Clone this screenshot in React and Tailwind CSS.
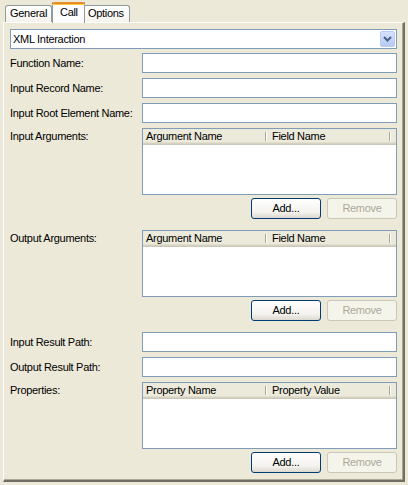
import React from "react";

const font = { fontFamily: '"Liberation Sans", Arial, sans-serif' };

function TextRow({ label, className = "" }) {
  return (
    <div className={"flex items-center h-[20px] " + className}>
      <div className="w-[132px] leading-[13px]">{label}</div>
      <div className="flex-1 h-[20px] border border-[#7F9DB9] bg-white" />
    </div>
  );
}

function Divider() {
  return <div className="w-[2px] h-[9px] border-l border-[#ACA899] border-r border-r-white self-center" />;
}

function ListRow({ label, c1, c2, className = "" }) {
  return (
    <div className={"flex " + className}>
      <div className="w-[132px] pt-[2px] leading-[13px]">{label}</div>
      <div className="flex-1 flex flex-col">
        <div className="h-[67px] border border-[#7F9DB9] bg-white">
          <div className="flex h-[16px] bg-[#EBEADB] shadow-[inset_0_-1px_0_#CBC7B8,inset_0_-2px_0_#D6D2C2,inset_0_-3px_0_#E2DECD] pb-[2px]">
            <div className="w-[122px] pl-[3px] leading-[14px]">{c1}</div>
            <Divider />
            <div className="w-[122px] pl-[5px] leading-[14px]">{c2}</div>
            <Divider />
          </div>
        </div>
        <div className="flex justify-end gap-[6px] mt-[3px]">
          <div className="w-[70px] h-[21px] rounded-[3px] border border-[#003C74] bg-[linear-gradient(#FFFFFF,#F3F2EE_70%,#DCD8CE)] flex items-center justify-center leading-[13px] text-black">
            Add...
          </div>
          <div className="w-[70px] h-[21px] rounded-[3px] border border-[#C9C7BA] bg-[#F5F4EA] flex items-center justify-center leading-[13px] text-[#ACA899]">
            Remove
          </div>
        </div>
      </div>
    </div>
  );
}

export default function App() {
  return (
    <div className="w-[408px] h-[485px] bg-[#ECE9D8] text-[11px] tracking-[-0.3px] text-black overflow-hidden" style={font}>
      {/* tab strip */}
      <div className="flex items-end h-[22px] pl-[5px]">
        <div className="w-[47px] h-[17px] border border-b-0 border-[#919B9C] rounded-t-[3px] bg-[linear-gradient(#FEFEFE,#F4F3EE)] pl-[4px] leading-[15px]">
          General
        </div>
        <div className="relative z-10 w-[33px] h-[21px] -mb-[1px] border-x border-[#919B9C] bg-[#FCFCFE] flex flex-col">
          <div className="h-[3px] -mx-[1px] rounded-t-[3px] bg-[#E68B2C] shadow-[inset_0_-1px_0_#FFC73C]" />
          <div className="pl-[7px] leading-[15px]">Call</div>
        </div>
        <div className="w-[45px] h-[17px] border border-b-0 border-l-0 border-[#919B9C] rounded-tr-[3px] bg-[linear-gradient(#FEFEFE,#F4F3EE)] pl-[3px] leading-[15px]">
          Options
        </div>
      </div>

      {/* panel */}
      <div className="ml-[3px] w-[402px] h-[460px] border-t border-l border-white border-r-2 border-b-2 border-r-[#716F64] border-b-[#716F64] shadow-[inset_-1px_-1px_0_#ACA899] pt-[6px] pl-[6px] pr-[6px] flex flex-col">
        <div className="flex items-center h-[20px] border border-[#7F9DB9] bg-white pl-[1px] pr-[1px]">
          <div className="flex-1 leading-[13px] pl-[1px]">XML Interaction</div>
          <div className="w-[15px] h-[16px] rounded-[2px] border border-[#BACBF3] bg-[linear-gradient(#D6E2FD,#B6C9F6)] flex items-center justify-center">
            <svg width="9" height="6" viewBox="0 0 9 6">
              <polyline points="1,1 4.5,4.5 8,1" fill="none" stroke="#4D6185" strokeWidth="2" />
            </svg>
          </div>
        </div>
        <TextRow label="Function Name:" className="mt-[4px]" />
        <TextRow label="Input Record Name:" className="mt-[5px]" />
        <TextRow label="Input Root Element Name:" className="mt-[5px]" />
        <ListRow label="Input Arguments:" c1="Argument Name" c2="Field Name" className="mt-[5px]" />
        <ListRow label="Output Arguments:" c1="Argument Name" c2="Field Name" className="mt-[11px]" />
        <TextRow label="Input Result Path:" className="mt-[11px]" />
        <TextRow label="Output Result Path:" className="mt-[5px]" />
        <ListRow label="Properties:" c1="Property Name" c2="Property Value" className="mt-[5px]" />
      </div>
    </div>
  );
}
